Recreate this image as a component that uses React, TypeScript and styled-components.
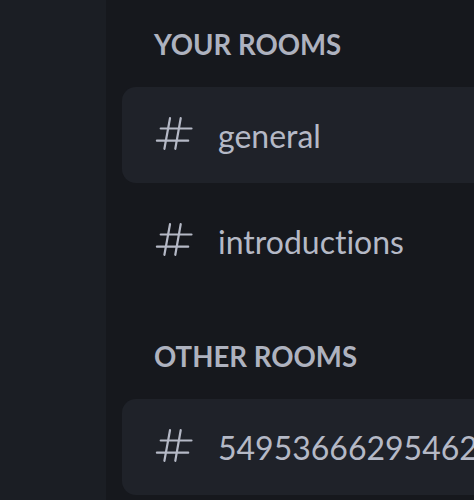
import React from 'react';
import styled, { createGlobalStyle } from 'styled-components';

const GlobalStyle = createGlobalStyle`
  html, body {
    margin: 0;
    padding: 0;
    background: #16181d;
    overflow: hidden;
  }
  body {
    font-family: Lato, "Open Sans", sans-serif;
    font-variant-ligatures: none;
    font-feature-settings: "liga" 0, "clig" 0;
  }
`;

const Layout = styled.div`
  display: flex;
  height: 500px;
  width: 100%;
`;

const Rail = styled.div`
  width: 106px;
  flex-shrink: 0;
  background: #1b1e24;
`;

const Sidebar = styled.nav`
  width: 640px;
  flex-shrink: 0;
  background: #16181d;
  padding: 25px 16px 0 16px;
  box-sizing: border-box;
`;

const Section = styled.section`
  margin-bottom: 48px;
`;

const Heading = styled.h2`
  margin: 0 0 22px 0;
  padding-left: 32px;
  font-size: 27.6px;
  line-height: 40px;
  font-weight: 700;
  color: #aeb2bf;
  text-transform: uppercase;
`;

const List = styled.ul`
  list-style: none;
  margin: 0;
  padding: 0;
  display: flex;
  flex-direction: column;
  gap: 10px;
`;

const Room = styled.li<{ $active?: boolean }>`
  display: flex;
  align-items: center;
  gap: 23px;
  height: 96px;
  padding-left: 33px;
  border-radius: 14px;
  background: ${p => (p.$active ? '#1f2229' : 'transparent')};
  color: #b5b9c6;
  font-size: 32px;
  white-space: nowrap;
  font-variant-ligatures: none;
  font-feature-settings: "liga" 0, "clig" 0;
`;

const HashIcon = () => (
  <svg width="40" height="40" viewBox="0 0 40 40" fill="none" stroke="#b5b9c6"
    strokeWidth="2.2" strokeLinecap="round" style={{ flexShrink: 0 }}>
    <path d="M5.7 13.5H36.5M1.9 25.7H33.2M15 3.2L9.4 33.8M25.7 3.2L20.3 33.8" />
  </svg>
);

const yourRooms = [
  { name: 'general', active: true },
  { name: 'introductions', active: false },
];

const otherRooms = [
  { name: '549536662954627072', active: true },
];

export default function App() {
  return (
    <>
      <GlobalStyle />
      <Layout>
        <Rail />
        <Sidebar>
          <Section>
            <Heading>Your rooms</Heading>
            <List>
              {yourRooms.map(r => (
                <Room key={r.name} $active={r.active}>
                  <HashIcon />
                  {r.name}
                </Room>
              ))}
            </List>
          </Section>
          <Section>
            <Heading>Other rooms</Heading>
            <List>
              {otherRooms.map(r => (
                <Room key={r.name} $active={r.active}>
                  <HashIcon />
                  {r.name}
                </Room>
              ))}
            </List>
          </Section>
        </Sidebar>
      </Layout>
    </>
  );
}
